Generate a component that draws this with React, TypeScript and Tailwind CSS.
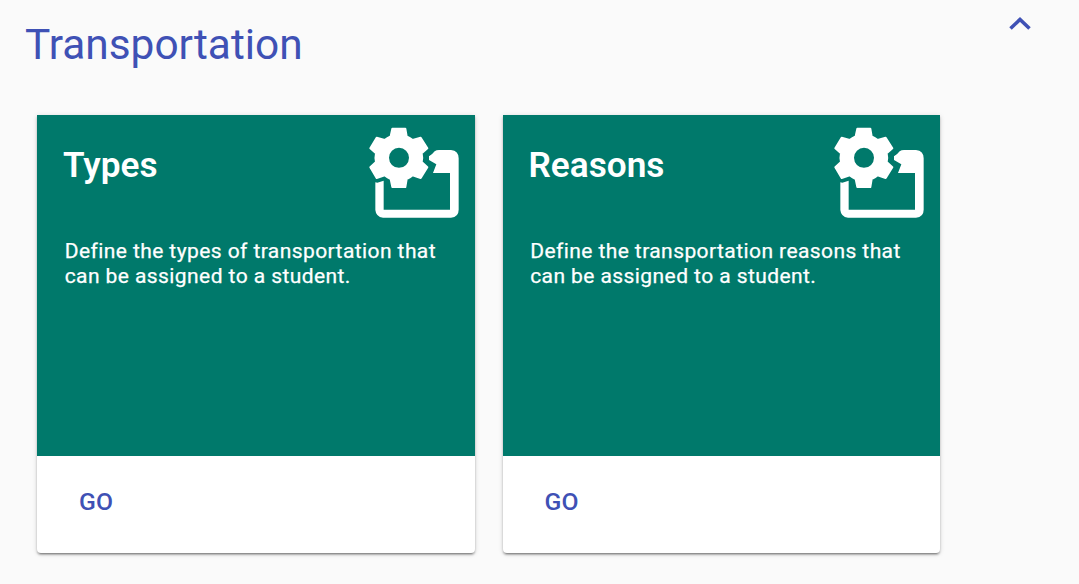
const cards = [
  { title: "Types", lines: ["Define the types of transportation that", "can be assigned to a student."] },
  { title: "Reasons", lines: ["Define the transportation reasons that", "can be assigned to a student."] },
];

function GearFolderIcon() {
  return (
    <svg className="h-[91px] w-[90px] shrink-0" viewBox="27 51 270 273" fill="#fff" aria-hidden="true">
      <path
        fillRule="evenodd"
        stroke="#fff"
        strokeWidth="6"
        strokeLinejoin="round"
        d="M97 56H136L140 79Q150 83 158 90L182 83L202 115L185 130Q188 143 185 156L202 172L182 204L158 196Q149 204 140 207L136 231H97L92 207Q82 203 74 196L50 204L31 172L48 156Q45 143 48 130L31 115L50 83L74 90Q82 83 92 79ZM117 110.500A33 33 0 1 0 117 176.500A33 33 0 1 0 117 110.500Z"
      />
      <path d="M46 217L52 218L71 212V299H270V189H219L229 163L207 150V139Q218 132 224 124Q229 120 237 120H273Q296 122 296 145V299Q296 321 273 323H69Q48 321 46 300Z" />
    </svg>
  );
}

function Card({ title, lines }: { title: string; lines: string[] }) {
  return (
    <article className="flex h-[438px] flex-1 flex-col overflow-hidden rounded-b-[4px] bg-white shadow-[0_2px_2px_rgba(0,0,0,0.24),0_3px_1px_-2px_rgba(0,0,0,0.2),0_1px_5px_rgba(0,0,0,0.16)]">
      <div className="h-[341px] bg-[#00796b] text-white">
        <header className="flex items-start justify-between pr-[15.600px] pl-[26px] pt-3">
          <h2 className="mt-[17px] text-[35.2px] leading-[42px] font-semibold">{title}</h2>
          <GearFolderIcon />
        </header>
        <p className="mt-[21px] pl-[27.700px] text-[21px] leading-[25px] tracking-[0.42px] whitespace-nowrap [-webkit-text-stroke:0.25px_#fff]">
          {lines.map((line) => (
            <span key={line} className="block">{line}</span>
          ))}
        </p>
      </div>
      <div className="pl-[42px] pt-[31px]">
        <button className="block text-[24.7px] leading-[29px] font-medium tracking-[0.2px] text-[#3f51b5]">GO</button>
      </div>
    </article>
  );
}

export default function App() {
  return (
    <main className="h-[584px] overflow-hidden bg-[#fafafa] font-['Roboto',sans-serif]">
      <header className="flex h-[115px] items-start justify-between pr-[48px] pl-[25px]">
        <h1 className="mt-[20px] text-[42.4px] leading-[50px] text-[#3f51b5]">Transportation</h1>
        <button aria-label="Collapse" className="mt-[16px]">
          <svg className="h-[14px] w-[22px]" viewBox="0 0 22 14" fill="none">
            <path d="M1.500 12.500L11 3.500L20.500 12.500" stroke="#3f51b5" strokeWidth="3.600" />
          </svg>
        </button>
      </header>
      <section className="flex w-[940px] gap-7 pl-[37px]">
        {cards.map((card) => (
          <Card key={card.title} {...card} />
        ))}
      </section>
    </main>
  );
}
